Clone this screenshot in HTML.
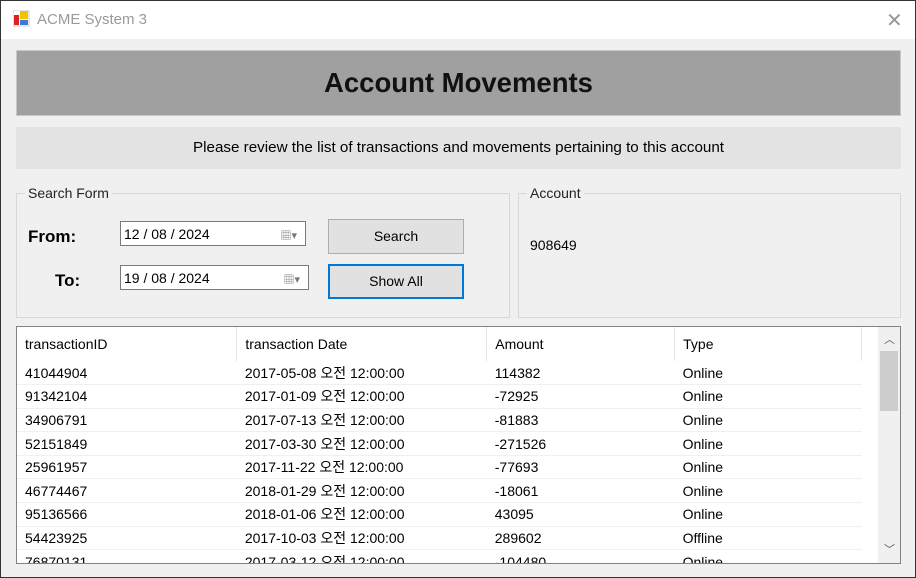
<!DOCTYPE html>
<html><head><meta charset="utf-8"><style>
*{box-sizing:border-box;margin:0;padding:0}
body{width:916px;height:578px;overflow:hidden;background:#333;font-family:"Liberation Sans","Noto Sans CJK KR",sans-serif;font-size:14px;color:#000;position:relative}
.win{position:absolute;left:1px;top:1px;width:914px;height:576px;background:#f0f0f0}
.title{position:absolute;left:0;top:0;width:914px;height:38px;background:#fff}
.title .t{position:absolute;left:36px;top:10px;font-size:15px;color:#9a9a9a}
.title .x{position:absolute;left:885px;top:7px;font-size:20px;color:#999;font-weight:300}
.abs{position:absolute}
.grp{position:absolute;border:1px solid #d8d8d8}
.grp .lg{position:absolute;top:-9px;left:8px;background:#f0f0f0;padding:0 3px;font-size:14px;color:#222}
.dt{position:absolute;background:#fff;border:1px solid #7a7a7a;height:25px;font-size:14px;padding:4px 3px}
.btn{position:absolute;background:#e1e1e1;border:1px solid #adadad;text-align:center;font-size:14px;line-height:32px}
table{border-collapse:collapse;font-size:14px}
td{height:23.6px;padding:0 0 0 8px;border-bottom:1px solid #f0f0f0;white-space:nowrap}
</style></head><body><div class="win">
<div class="title">
<svg class="abs" style="left:12px;top:9px" width="17" height="17"><rect x="0" y="0" width="16" height="16" fill="#fff" stroke="#ccc"/><rect x="7" y="1" width="8" height="8" fill="#f2c200"/><rect x="1" y="5" width="5" height="10" fill="#d22"/><rect x="7" y="10" width="8" height="5" fill="#3b7bd4"/></svg>
<div class="t">ACME System 3</div><div class="x">✕</div></div>
<div class="abs" style="left:15px;top:49px;width:885px;height:66px;background:#a0a0a0;border:1px solid #c8c8c8;text-align:center;font-weight:bold;font-size:27.5px;line-height:64px;color:#111">Account Movements</div>
<div class="abs" style="left:15px;top:126px;width:885px;height:42px;background:#e3e3e3;text-align:center;line-height:42px;font-size:15.2px">Please review the list of transactions and movements pertaining to this account</div>
<div class="grp" style="left:15px;top:192px;width:494px;height:125px"><div class="lg">Search Form</div></div>
<div class="abs" style="left:27px;top:226px;font-weight:bold;font-size:17px">From:</div>
<div class="abs" style="left:54px;top:270px;font-weight:bold;font-size:17px">To:</div>
<div class="dt" style="left:119px;top:220px;width:186px">12 / 08 / 2024<span style="position:absolute;right:8px;top:5px;color:#777;font-size:11px">▦▾</span></div>
<div class="dt" style="left:119px;top:264px;width:189px">19 / 08 / 2024<span style="position:absolute;right:8px;top:5px;color:#777;font-size:11px">▦▾</span></div>
<div class="btn" style="left:327px;top:218px;width:136px;height:35px">Search</div>
<div class="btn" style="left:327px;top:263px;width:136px;height:35px;border:2px solid #0078d7;line-height:31px">Show All</div>
<div class="grp" style="left:517px;top:192px;width:383px;height:125px"><div class="lg">Account</div></div>
<div class="abs" style="left:529px;top:236px">908649</div>
<div class="abs" style="left:15px;top:325px;width:885px;height:238px;background:#fff;border:1px solid #828282;overflow:hidden">
<table style="position:absolute;left:0;top:0;width:845px">
<tr style="height:34px"><td style="width:220px;border-right:1px solid #e5e5e5;border-bottom:none">transactionID</td><td style="width:250px;border-right:1px solid #e5e5e5;border-bottom:none">transaction Date</td><td style="width:188px;border-right:1px solid #e5e5e5;border-bottom:none">Amount</td><td style="width:187px;border-right:1px solid #e5e5e5;border-bottom:none">Type</td></tr>
<tr><td>41044904</td><td>2017-05-08 오전 12:00:00</td><td>114382</td><td>Online</td></tr>
<tr><td>91342104</td><td>2017-01-09 오전 12:00:00</td><td>-72925</td><td>Online</td></tr>
<tr><td>34906791</td><td>2017-07-13 오전 12:00:00</td><td>-81883</td><td>Online</td></tr>
<tr><td>52151849</td><td>2017-03-30 오전 12:00:00</td><td>-271526</td><td>Online</td></tr>
<tr><td>25961957</td><td>2017-11-22 오전 12:00:00</td><td>-77693</td><td>Online</td></tr>
<tr><td>46774467</td><td>2018-01-29 오전 12:00:00</td><td>-18061</td><td>Online</td></tr>
<tr><td>95136566</td><td>2018-01-06 오전 12:00:00</td><td>43095</td><td>Online</td></tr>
<tr><td>54423925</td><td>2017-10-03 오전 12:00:00</td><td>289602</td><td>Offline</td></tr>
<tr><td>76870131</td><td>2017-03-12 오전 12:00:00</td><td>-104480</td><td>Online</td></tr>
</table>
<div class="abs" style="left:861px;top:0;width:22px;height:236px;background:#f0f0f0">
<div class="abs" style="left:6px;top:4px;font-size:11px;color:#555">︿</div>
<div class="abs" style="left:2px;top:24px;width:18px;height:60px;background:#cdcdcd"></div>
<div class="abs" style="left:6px;top:214px;font-size:11px;color:#555">﹀</div>
</div></div>
</div></body></html>
